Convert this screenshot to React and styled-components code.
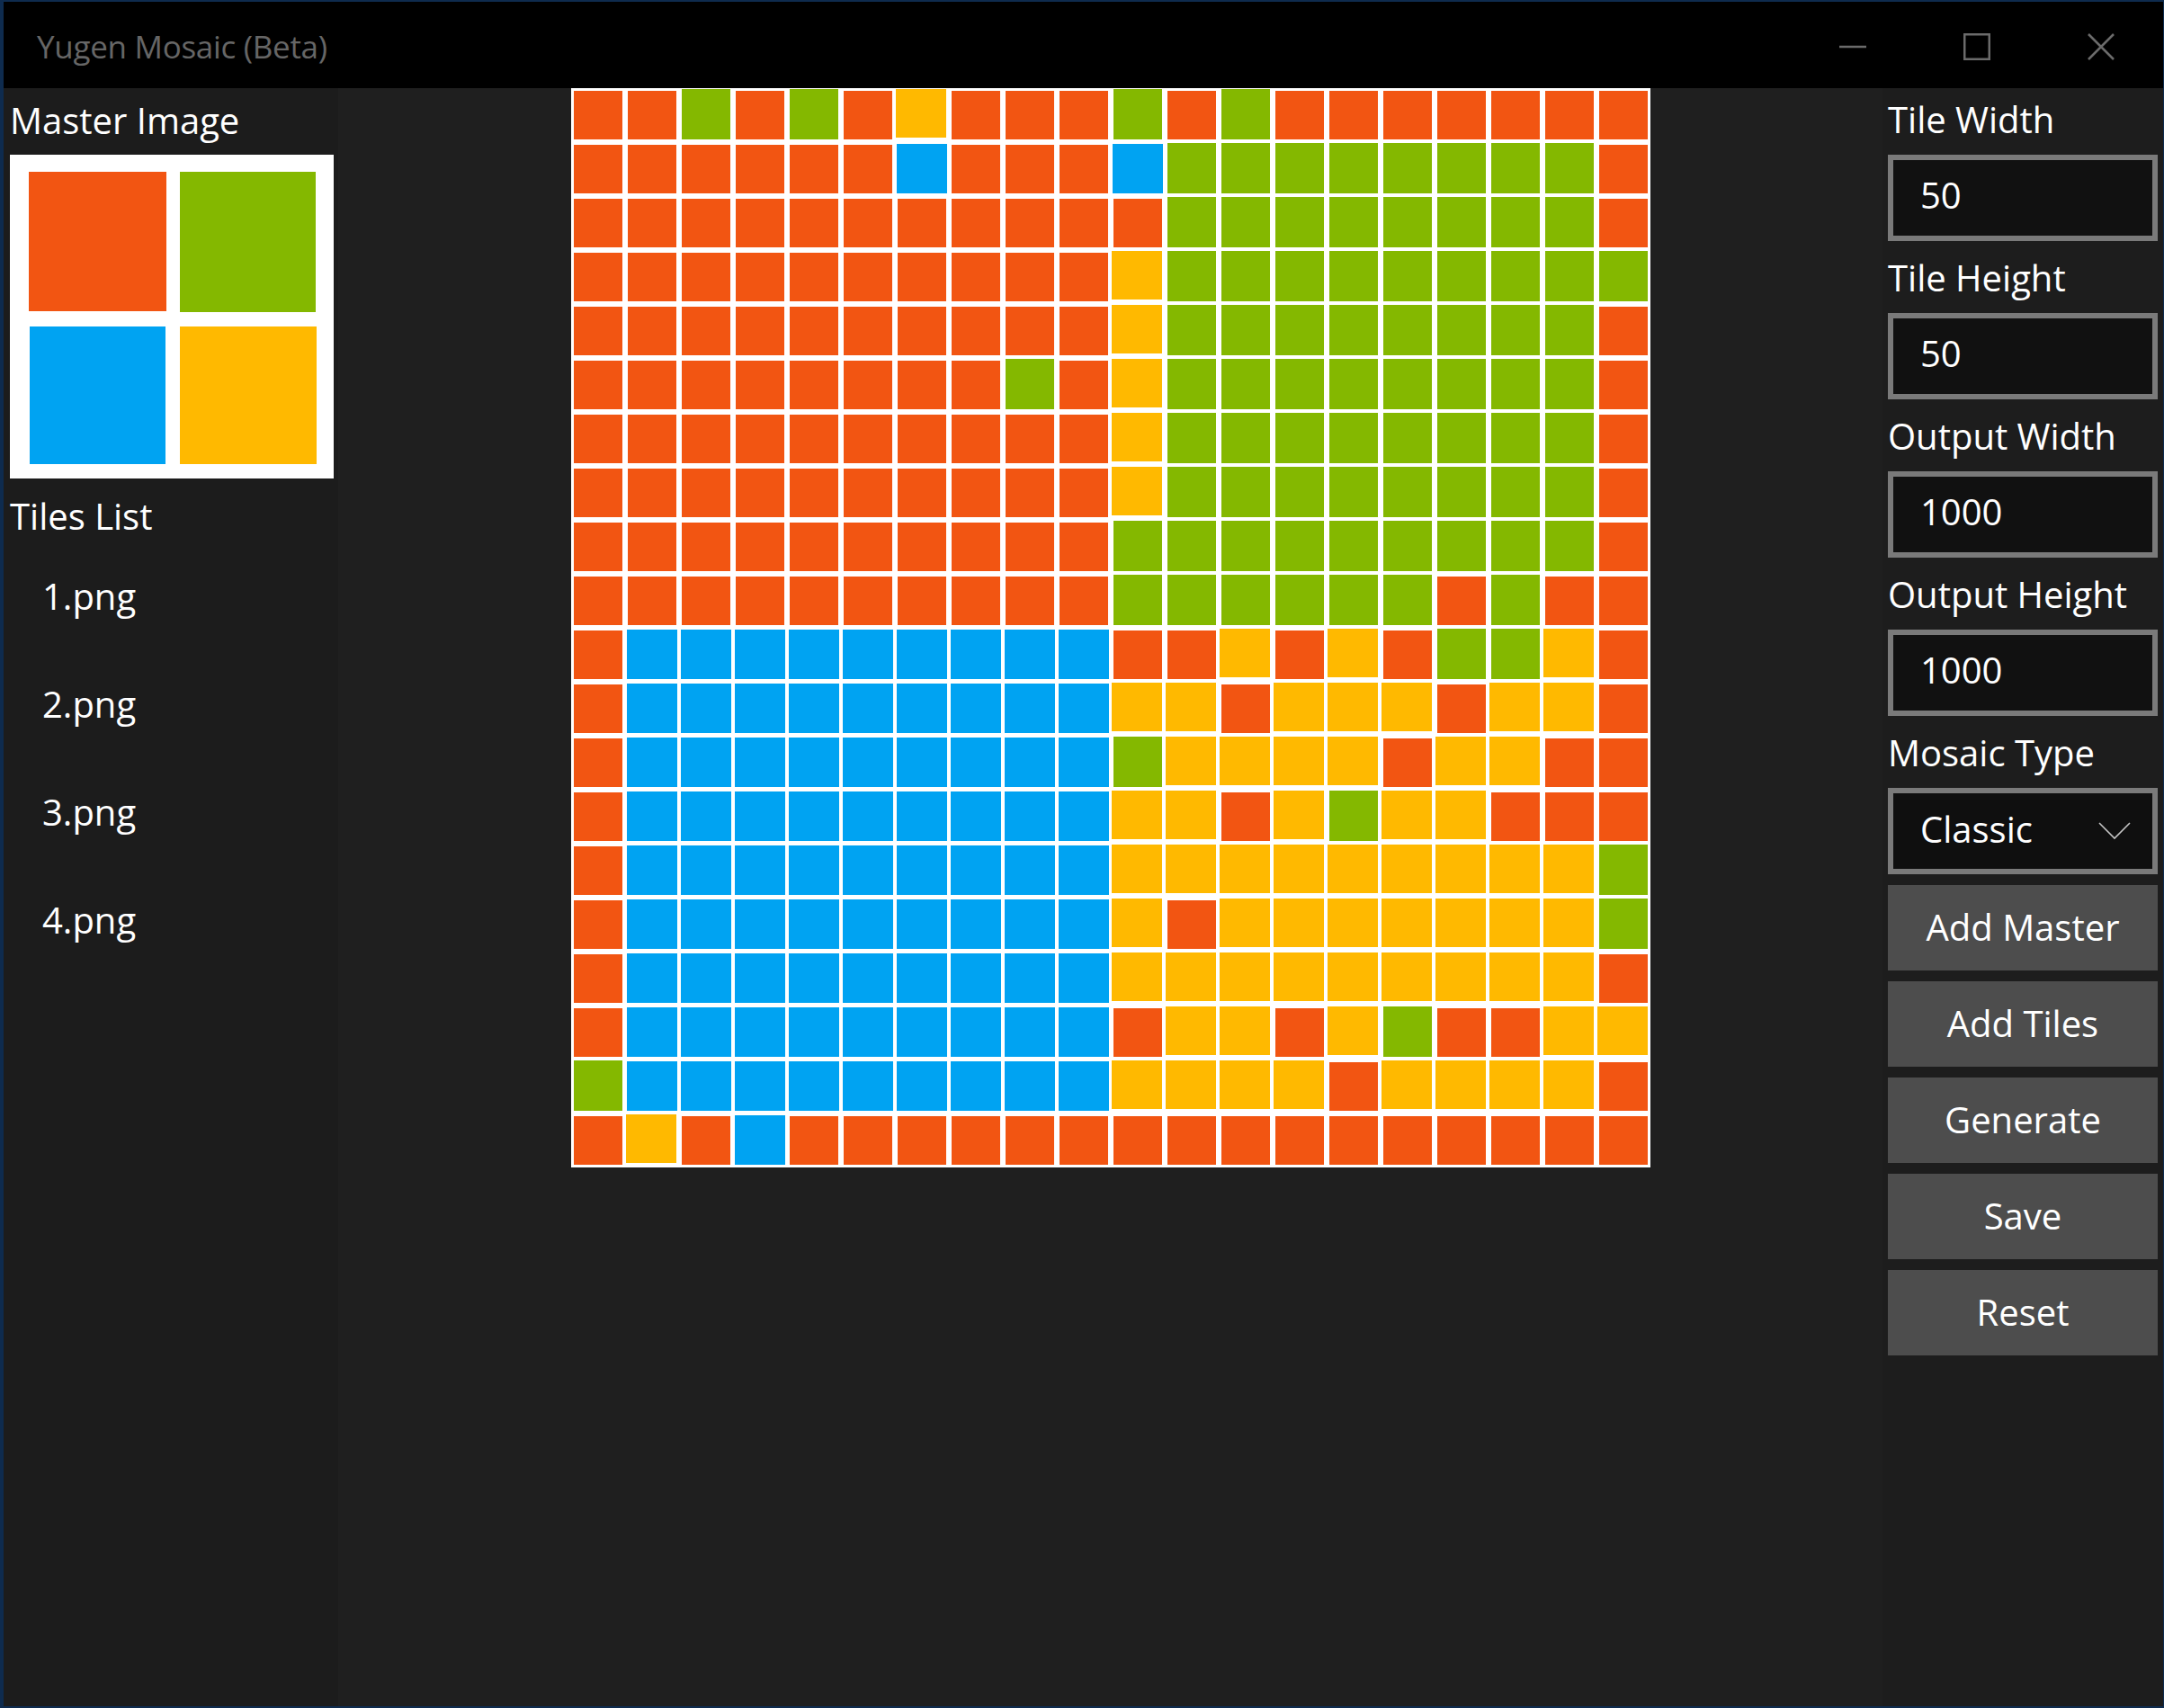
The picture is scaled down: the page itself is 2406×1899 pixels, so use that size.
import React from 'react';
import styled, { createGlobalStyle } from 'styled-components';

const GlobalStyle = createGlobalStyle`
  html, body {
    margin: 0;
    padding: 0;
    background: #1f1f1f;
  }
  * {
    box-sizing: border-box;
  }
`;

const FONT = `"Open Sans", "Noto Sans", sans-serif`;

const Frame = styled.div`
  display: flex;
  flex-direction: column;
  width: 2406px;
  height: 1899px;
  border-style: solid;
  border-color: #0e2b4e;
  border-width: 2px 1px 2px 4px;
  font-family: ${FONT};
  font-size: 40px;
  color: #fff;
  overflow: hidden;
`;

const TitleBar = styled.div`
  display: flex;
  align-items: center;
  flex: 0 0 96px;
  background: #000;
  padding-left: 37px;
`;

const Title = styled.div`
  flex: 1;
  padding-top: 2px;
  font-size: 35px;
  letter-spacing: -0.3px;
  color: #666;
`;

const WindowButton = styled.div`
  display: flex;
  align-items: center;
  justify-content: center;
  width: 138px;
  height: 96px;
  padding-top: 3px;

  svg {
    display: block;
    stroke: #6b6b6b;
    stroke-width: 2.5;
    fill: none;
  }
`;

const WindowButtons = styled.div`
  display: flex;
  margin-right: 0;
`;

const Body = styled.div`
  display: flex;
  flex: 1;
  min-height: 0;
  background: #1f1f1f;
`;

const LeftPanel = styled.div`
  flex: 0 0 372px;
  padding-left: 7px;
  background: #1c1c1c;
`;

const SectionTitle = styled.div`
  height: ${(p) => p.$height}px;
  line-height: ${(p) => p.$lineHeight}px;
`;

const MasterImage = styled.svg`
  display: block;
  width: 360px;
  height: 360px;
  background: #fff;
`;

const LogoSquares = styled.g`
  filter: blur(0.7px);
`;

const TilesList = styled.div`
  display: flex;
  flex-direction: column;
  gap: 26px;
`;

const TileItem = styled.div`
  height: 94px;
  line-height: 94px;
  padding-left: 36px;
`;

const Center = styled.div`
  display: flex;
  flex: 1;
  justify-content: center;
  align-items: flex-start;
`;

const Mosaic = styled.div`
  display: grid;
  grid-template-columns: repeat(20, 60px);
  grid-auto-rows: 60px;
  background: #fff;
`;

const TILE_COLORS = {
  O: { bg: '#f25512', margin: '3px 3px 3px 3px' },
  G: { bg: '#84b800', margin: '1px 3px 3px 3px' },
  B: { bg: '#00a3f2', margin: '2px 2px 3px 2px' },
  Y: { bg: '#ffb900', margin: '1px 3px 5px 1px' },
};

const Tile = styled.div`
  background: ${(p) => TILE_COLORS[p.$kind].bg};
  margin: ${(p) => TILE_COLORS[p.$kind].margin};
  filter: blur(0.6px);
`;

const RightPanel = styled.div`
  display: flex;
  flex-direction: column;
  gap: 6px;
  flex: 0 0 312px;
  padding-left: 6px;
  background: #1d1d1d;
`;

const Field = styled.div`
  display: flex;
  flex-direction: column;
  width: 300px;
`;

const FieldLabel = styled.label`
  height: 74px;
  line-height: 70px;
`;

const NumberInput = styled.input`
  display: block;
  width: 300px;
  height: 96px;
  border: 6px solid #7a7a7a;
  border-radius: 0;
  outline: none;
  padding: 0 0 8px 30px;
  background: #111;
  color: #fff;
  font: inherit;
`;

const Combo = styled.div`
  display: flex;
  align-items: center;
  justify-content: space-between;
  width: 300px;
  height: 96px;
  border: 6px solid #7a7a7a;
  padding: 0 24px 6px 30px;
  background: #0f0f0f;

  svg {
    display: block;
    margin-top: 6px;
    stroke: #c4c4c4;
    stroke-width: 1.6;
    fill: none;
  }
`;

const Buttons = styled.div`
  display: flex;
  flex-direction: column;
  gap: 12px;
  margin-top: 6px;
`;

const Button = styled.button`
  width: 300px;
  height: 95px;
  border: 0;
  padding: 0 0 3px;
  background: #4d4d4d;
  color: #fff;
  font: inherit;
`;

const mosaicRows = [
  'OOGOGOYOOOGOGOOOOOOO',
  'OOOOOOBOOOBGGGGGGGGO',
  'OOOOOOOOOOOGGGGGGGGO',
  'OOOOOOOOOOYGGGGGGGGG',
  'OOOOOOOOOOYGGGGGGGGO',
  'OOOOOOOOGOYGGGGGGGGO',
  'OOOOOOOOOOYGGGGGGGGO',
  'OOOOOOOOOOYGGGGGGGGO',
  'OOOOOOOOOOGGGGGGGGGO',
  'OOOOOOOOOOGGGGGGOGOO',
  'OBBBBBBBBBOOYOYOGGYO',
  'OBBBBBBBBBYYOYYYOYYO',
  'OBBBBBBBBBGYYYYOYYOO',
  'OBBBBBBBBBYYOYGYYOOO',
  'OBBBBBBBBBYYYYYYYYYG',
  'OBBBBBBBBBYOYYYYYYYG',
  'OBBBBBBBBBYYYYYYYYYO',
  'OBBBBBBBBBOYYOYGOOYY',
  'GBBBBBBBBBYYYYOYYYYO',
  'OYOBOOOOOOOOOOOOOOOO',
];

const fields = [
  { label: 'Tile Width', value: '50' },
  { label: 'Tile Height', value: '50' },
  { label: 'Output Width', value: '1000' },
  { label: 'Output Height', value: '1000' },
];

const actions = ['Add Master', 'Add Tiles', 'Generate', 'Save', 'Reset'];
const tileFiles = ['1.png', '2.png', '3.png', '4.png'];

const App = () => {
  return (
    <Frame>
      <GlobalStyle />
      <TitleBar>
        <Title>Yugen Mosaic (Beta)</Title>
        <WindowButtons>
          <WindowButton>
            <svg width="30" height="30" viewBox="0 0 30 30"><path d="M0 15H30" /></svg>
          </WindowButton>
          <WindowButton>
            <svg width="30" height="30" viewBox="0 0 30 30"><rect x="1.25" y="1.25" width="27.5" height="27.5" /></svg>
          </WindowButton>
          <WindowButton>
            <svg width="30" height="30" viewBox="0 0 30 30"><path d="M1 1L29 29M29 1L1 29" /></svg>
          </WindowButton>
        </WindowButtons>
      </TitleBar>
      <Body>
        <LeftPanel>
          <SectionTitle $height={74} $lineHeight={72}>Master Image</SectionTitle>
          <MasterImage viewBox="0 0 360 360">
            <LogoSquares>
              <rect x="21" y="19" width="153" height="155" fill="#f25512" />
              <rect x="189" y="19" width="151" height="156" fill="#84b800" />
              <rect x="22" y="191" width="151" height="153" fill="#00a3f2" />
              <rect x="189" y="191" width="152" height="153" fill="#ffb900" />
            </LogoSquares>
          </MasterImage>
          <SectionTitle $height={84} $lineHeight={84}>Tiles List</SectionTitle>
          <TilesList>
            {tileFiles.map((name) => (
              <TileItem key={name}>{name}</TileItem>
            ))}
          </TilesList>
        </LeftPanel>
        <Center>
          <Mosaic>
            {mosaicRows.map((row, r) =>
              row.split('').map((kind, c) => <Tile key={`${r}-${c}`} $kind={kind} />)
            )}
          </Mosaic>
        </Center>
        <RightPanel>
          {fields.map((field) => (
            <Field key={field.label}>
              <FieldLabel>{field.label}</FieldLabel>
              <NumberInput defaultValue={field.value} />
            </Field>
          ))}
          <Field>
            <FieldLabel>Mosaic Type</FieldLabel>
            <Combo>
              <span>Classic</span>
              <svg width="36" height="20" viewBox="0 0 36 20"><path d="M1 1L18 18L35 1" /></svg>
            </Combo>
          </Field>
          <Buttons>
            {actions.map((action) => (
              <Button key={action}>{action}</Button>
            ))}
          </Buttons>
        </RightPanel>
      </Body>
    </Frame>
  );
};

export default App;
